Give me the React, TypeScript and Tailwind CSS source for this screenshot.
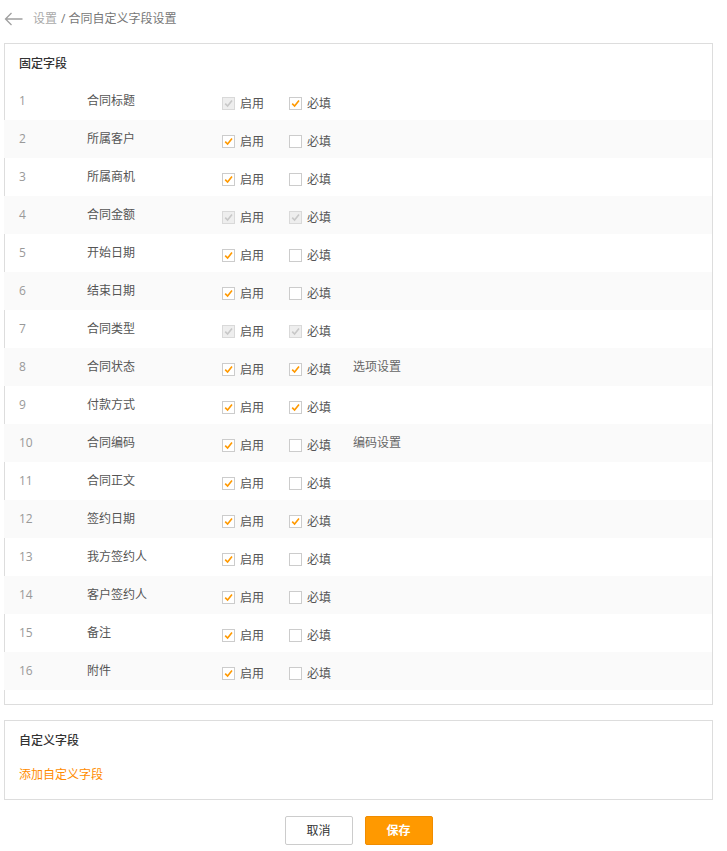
import React from "react";

type Box = "on" | "off" | "lock";

const fields: { name: string; enable: Box; required: Box; extra?: string }[] = [
  { name: "合同标题", enable: "lock", required: "on" },
  { name: "所属客户", enable: "on", required: "off" },
  { name: "所属商机", enable: "on", required: "off" },
  { name: "合同金额", enable: "lock", required: "lock" },
  { name: "开始日期", enable: "on", required: "off" },
  { name: "结束日期", enable: "on", required: "off" },
  { name: "合同类型", enable: "lock", required: "lock" },
  { name: "合同状态", enable: "on", required: "on", extra: "选项设置" },
  { name: "付款方式", enable: "on", required: "on" },
  { name: "合同编码", enable: "on", required: "off", extra: "编码设置" },
  { name: "合同正文", enable: "on", required: "off" },
  { name: "签约日期", enable: "on", required: "on" },
  { name: "我方签约人", enable: "on", required: "off" },
  { name: "客户签约人", enable: "on", required: "off" },
  { name: "备注", enable: "on", required: "off" },
  { name: "附件", enable: "on", required: "off" },
];

function Check({ state }: { state: Box }) {
  const box =
    state === "lock"
      ? "bg-[#eeeeee] border-[#d9d9d9]"
      : "bg-white border-[#cccccc]";
  return (
    <span className={`w-[13px] h-[13px] border ${box} flex items-center justify-center shrink-0`}>
      {state !== "off" && (
        <svg width="11" height="11" viewBox="0 0 11 11" fill="none">
          <path
            d="M2.2 5.6 L4.6 8 L9 2.6"
            stroke={state === "lock" ? "#c8c8c8" : "#ff9900"}
            strokeWidth="1.6"
          />
        </svg>
      )}
    </span>
  );
}

export default function App() {
  return (
    <div
      className="w-[727px] min-h-[851px] bg-white pl-1 text-[12px] text-[#555]"
      style={{ fontFamily: '"Open Sans", "Noto Sans CJK SC", sans-serif' }}
    >
      {/* 面包屑 */}
      <div className="h-[43px] flex items-center pb-[5px]">
        <svg width="19" height="14" viewBox="0 0 19 14" fill="none" className="mr-[10px]">
          <path d="M18.5 7 H1.5 M7.5 1 L1.5 7 L7.5 13" stroke="#a0a0a0" strokeWidth="1.3" />
        </svg>
        <span className="text-[#aaa]">设置</span>
        <span className="text-[#777] ml-1">/ 合同自定义字段设置</span>
      </div>

      <div className="w-[709px]">
        {/* 固定字段 */}
        <div className="border border-[#dddddd] pb-[14px]">
          <div className="h-[38px] flex items-center pl-[14px] pt-[2px] text-[#333] font-medium">固定字段</div>
          {fields.map((f, i) => (
            <div
              key={f.name}
              className={`h-[38px] flex items-center pl-[15px] ml-[-1px] ${i % 2 === 1 ? "bg-[#fafafa]" : ""}`}
            >
              <span className="w-[68px] text-[#999]">{i + 1}</span>
              <span className="w-[135px]">{f.name}</span>
              <div className="flex items-center mt-[5px]">
                <label className="w-[67px] flex items-center gap-[5px]">
                  <Check state={f.enable} />
                  <span>启用</span>
                </label>
                <label className="w-[64px] flex items-center gap-[5px]">
                  <Check state={f.required} />
                  <span>必填</span>
                </label>
              </div>
              {f.extra && <span className="text-[#666]">{f.extra}</span>}
            </div>
          ))}
        </div>

        {/* 自定义字段 */}
        <div className="border border-[#dddddd] mt-[15px] pb-[8px] pl-[14px]">
          <div className="h-[38px] flex items-center pt-[2px] text-[#333] font-medium">自定义字段</div>
          <div className="h-[32px] flex items-center text-[#ff8c00]">添加自定义字段</div>
        </div>

        <div className="flex justify-center gap-[12px] mt-[16px]">
          <button className="w-[68px] h-[29px] border border-[#cccccc] rounded-[2px] bg-white text-[#333]">
            取消
          </button>
          <button className="w-[68px] h-[29px] border border-[#f08c00] rounded-[2px] bg-[#ff9900] text-white font-bold">
            保存
          </button>
        </div>
      </div>
    </div>
  );
}
